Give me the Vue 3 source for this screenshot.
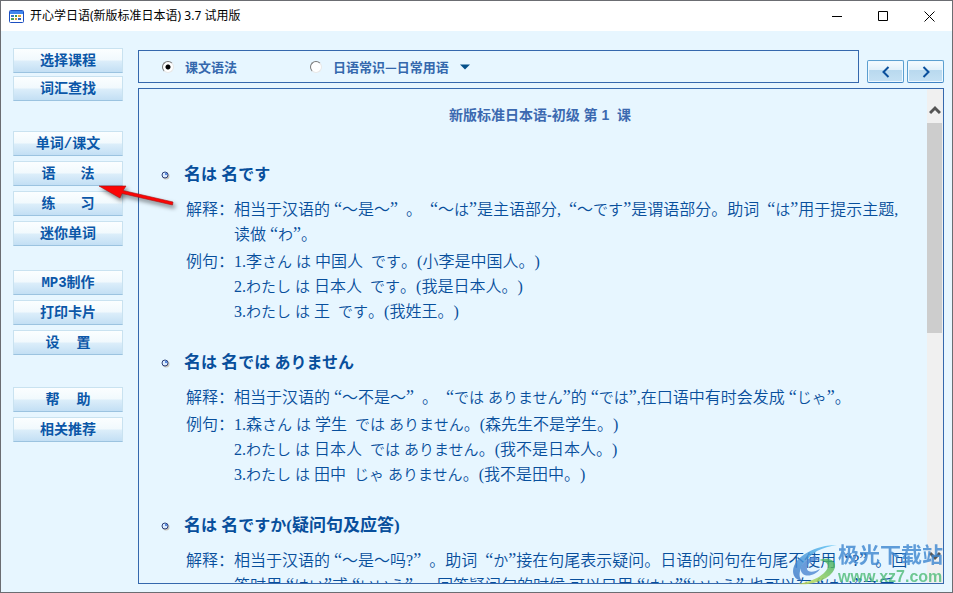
<script setup>
import { ref } from 'vue'

const menu = [
  { name: 'lookup', items: ['选择课程', '词汇查找'] },
  { name: 'study', items: ['单词/课文', '语   法', '练   习', '迷你单词'] },
  { name: 'tools', items: ['MP3制作', '打印卡片', '设  置'] },
  { name: 'about', items: ['帮  助', '相关推荐'] }
]

const topic = ref('grammar')

const heading = '新版标准日本语-初级 第 1  课'

const lessons = [
  {
    title: '名は 名です',
    note: '相当于汉语的 “～是～”  。  “～は”是主语部分,  “～です”是谓语部分。助词  “は”用于提示主题,读做 “わ”。',
    examples: [
      '1.李さん は 中国人  です。(小李是中国人。)',
      '2.わたし は 日本人  です。(我是日本人。)',
      '3.わたし は 王  です。(我姓王。)'
    ]
  },
  {
    title: '名は 名では ありません',
    note: '相当于汉语的 “～不是～”  。  “では ありません”的 “では”,在口语中有时会发成 “じゃ”。',
    examples: [
      '1.森さん は 学生  では ありません。(森先生不是学生。)',
      '2.わたし は 日本人  では ありません。(我不是日本人。)',
      '3.わたし は 田中  じゃ ありません。(我不是田中。)'
    ]
  },
  {
    title: '名は 名ですか(疑问句及应答)',
    note: '相当于汉语的 “～是～吗?”  。助词  “か”接在句尾表示疑问。日语的问句在句尾不使用  “?”  。回答时用 “はい”或 “いいえ”  。回答疑问句的时候,可以只用 “はい”“いいえ”,也可以在 “はい”之后',
    examples: []
  }
]

// kana are set a little smaller than the hanzi around them, quotes a little larger
function runs(text) {
  return text.split(/([\u3041-\u3096]+|[“”])/).filter(Boolean).map(t => ({
    text: t,
    type: /^[\u3041-\u3096]/.test(t) ? 'kana' : /^[“”]/.test(t) ? 'quote' : ''
  }))
}
</script>

<template>
  <div class="window">
    <header class="titlebar">
      <svg class="app-icon" viewBox="0 0 15 13">
        <rect x="0.5" y="0.5" width="14" height="12" rx="1" fill="#fff" stroke="#1c4fc0" />
        <rect x="1" y="1" width="13" height="3" fill="#3f86ee" />
        <rect x="2" y="5" width="3" height="2" fill="#3a76c4" />
        <rect x="6" y="5" width="2" height="2" fill="#2f9a58" />
        <rect x="9" y="5" width="3" height="2" fill="#e0a63a" />
        <rect x="2" y="8" width="3" height="2" fill="#4ba35c" />
        <rect x="6" y="8" width="2" height="2" fill="#d69a35" />
        <rect x="9" y="8" width="3" height="2" fill="#3467b8" />
      </svg>
      <h1>开心学日语(新版标准日本语) 3.7 试用版</h1>
      <div class="window-buttons">
        <button type="button" aria-label="最小化">
          <svg viewBox="0 0 11 11"><path d="M0 5.5h10" /></svg>
        </button>
        <button type="button" aria-label="最大化">
          <svg viewBox="0 0 11 11"><path d="M.5 .5h9v9h-9z" /></svg>
        </button>
        <button type="button" aria-label="关闭">
          <svg viewBox="0 0 11 11"><path d="M.5 .5l10 10M10.5 .5l-10 10" /></svg>
        </button>
      </div>
    </header>

    <div class="body">
      <nav class="sidebar">
        <div v-for="group in menu" :key="group.name" class="group" :class="group.name">
          <button v-for="item in group.items" :key="item" type="button">{{ item }}</button>
        </div>
      </nav>

      <main>
        <div class="top">
          <div class="topics">
            <label class="topic grammar">
              <input v-model="topic" type="radio" name="topic" value="grammar" />
              课文语法
            </label>
            <label class="topic">
              <input v-model="topic" type="radio" name="topic" value="phrases" />
              日语常识—日常用语
            </label>
            <button type="button" class="drop" aria-label="展开">
              <svg viewBox="0 0 10 6"><path d="M0 .5h10L5 5.5z" fill="#04508a" /></svg>
            </button>
          </div>
          <div class="pager">
            <button type="button" aria-label="上一课">
              <svg viewBox="0 0 8 12"><path d="M6.5 1L1.5 6l5 5" /></svg>
            </button>
            <button type="button" aria-label="下一课">
              <svg viewBox="0 0 8 12"><path d="M1.5 1l5 5-5 5" /></svg>
            </button>
          </div>
        </div>

        <div class="panel">
          <article>
            <h2>{{ heading }}</h2>
            <section v-for="lesson in lessons" :key="lesson.title">
              <h3>
                <svg class="bullet" viewBox="0 0 9 9">
                  <circle cx="5" cy="5" r="3.5" fill="#c9c5bd" />
                  <circle cx="4" cy="4" r="3" fill="#dcecff" stroke="#2d3f78" />
                  <path d="M4 4V1.5A2.5 2.5 0 0 1 6.5 4z" fill="#5b8ce0" />
                </svg>
                <span>
                  <span v-for="(run, i) in runs(lesson.title)" :key="i" :class="run.type">{{ run.text }}</span>
                </span>
              </h3>
              <dl>
                <dt>解释：</dt>
                <dd>
                  <span v-for="(run, i) in runs(lesson.note)" :key="i" :class="run.type">{{ run.text }}</span>
                </dd>
                <template v-if="lesson.examples.length">
                  <dt>例句：</dt>
                  <dd>
                    <p v-for="line in lesson.examples" :key="line">
                      <span v-for="(run, i) in runs(line)" :key="i" :class="run.type">{{ run.text }}</span>
                    </p>
                  </dd>
                </template>
              </dl>
            </section>
          </article>
          <div class="scrollbar">
            <button type="button" aria-label="向上滚动">
              <svg viewBox="0 0 12 10"><path d="M1 8l5-5 5 5" /></svg>
            </button>
            <div class="track"><div class="thumb"></div></div>
            <button type="button" aria-label="向下滚动">
              <svg viewBox="0 0 12 10"><path d="M1 2l5 5 5-5" /></svg>
            </button>
          </div>
        </div>
      </main>
    </div>

    <svg class="pointer" viewBox="0 0 84 34">
      <path d="M3 6L30 6L27 10.5L77 22L76.5 25L26 13.5L24 18z" fill="#fb0505" stroke="#a51212" stroke-width="0.6" />
    </svg>

    <div class="watermark">
      <svg viewBox="0 0 46 42">
        <defs>
          <linearGradient id="sky" x1="0" y1="1" x2="1" y2="0">
            <stop offset="0" stop-color="#3a72c4" />
            <stop offset="1" stop-color="#56c4f5" />
          </linearGradient>
          <linearGradient id="leaf" x1="0" y1="1" x2="1" y2="0">
            <stop offset="0" stop-color="#d3e24c" />
            <stop offset="1" stop-color="#35ae65" />
          </linearGradient>
        </defs>
        <path d="M45 1C24 1 2 12 1 27c0 6 4 9 9 10-6-7 0-20 15-30C31 4 38 2 45 1z" fill="url(#sky)" />
        <path d="M23 12C13 15 6 23 10 29c4 5 14 2 18-4-5 3-12 4-13 0-1-5 5-9 12-9z" fill="#4c86d2" />
        <path d="M27 16c9-3 17 0 16 7C41 34 21 42 6 40c13-2 29-9 30-18 0-3-4-5-9-6z" fill="url(#leaf)" />
      </svg>
      <div class="site">
        <strong>极光下载站</strong>
        <span>www.xz7.com</span>
      </div>
    </div>
  </div>
</template>

<style>
body {
  margin: 0;
}
</style>

<style scoped>
* {
  box-sizing: border-box;
}

.window {
  position: relative;
  display: flex;
  flex-direction: column;
  height: 100vh;
  border: 1px solid #6b6d72;
  background: #e7f6ff;
  overflow: hidden;
  font-family: "Noto Sans CJK SC", sans-serif;
}

h1, h2, h3, p, dl, dd {
  margin: 0;
}

button {
  padding: 0;
  border: 0;
  background: none;
  font-family: inherit;
}

/* title bar */
.titlebar {
  display: flex;
  align-items: center;
  height: 30px;
  flex: none;
  padding-left: 8px;
  background: #fff;
}

.app-icon {
  width: 15px;
  height: 13px;
}

.titlebar h1 {
  flex: 1;
  margin-left: 6px;
  font: 12px/28px "Noto Sans", "Noto Sans CJK SC", sans-serif;
  color: #000;
}

.window-buttons {
  display: flex;
  align-self: stretch;
}

.window-buttons button {
  display: flex;
  align-items: center;
  justify-content: center;
  width: 46px;
}

.window-buttons svg {
  width: 11px;
  height: 11px;
  fill: none;
  stroke: #000;
}

/* layout */
.body {
  flex: 1;
  display: flex;
  min-height: 0;
  padding: 17px 8px 8px 12px;
}

.sidebar {
  flex: none;
  width: 110px;
  margin-right: 15px;
}

.group {
  display: flex;
  flex-direction: column;
  gap: 5px;
}

.lookup {
  gap: 3px;
  margin-bottom: 30px;
}

.study {
  margin-bottom: 24px;
}

.tools {
  margin-bottom: 32px;
}

.sidebar button {
  height: 25px;
  border: 1px solid #c9e2f0;
  border-bottom-color: #9bc3e0;
  background: linear-gradient(#fbfeff 0, #f1f9fd 48%, #dceefa 52%, #c3dff4 100%);
  color: #0b57a8;
  font: bold 14px/22px "Liberation Mono", "Noto Sans CJK SC", monospace;
  white-space: pre;
}

main {
  flex: 1;
  display: flex;
  flex-direction: column;
  min-width: 0;
}

/* topic bar */
.top {
  display: flex;
  align-items: flex-end;
  gap: 8px;
  margin: 2px 0 5px;
}

.topics {
  flex: 1;
  display: flex;
  align-items: center;
  height: 33px;
  padding-left: 23px;
  border: 1px solid #3568ad;
}

.topic {
  display: flex;
  align-items: center;
  gap: 11px;
  color: #3568ad;
  font-size: 13px;
  font-weight: bold;
}

.grammar {
  margin-right: 73px;
}

.topic input {
  appearance: none;
  width: 12px;
  height: 12px;
  margin: 0;
  border: 1px solid;
  border-color: #777 #e8e8e8 #e8e8e8 #777;
  border-radius: 50%;
  background: #fff;
}

.topic input:checked {
  background: radial-gradient(circle, #000 2px, #fff 3px);
}

.drop {
  display: flex;
  margin-left: 11px;
}

.drop svg {
  width: 10px;
  height: 6px;
}

.pager {
  display: flex;
  gap: 3px;
}

.pager button {
  display: flex;
  align-items: center;
  justify-content: center;
  width: 37px;
  height: 23px;
  border: 1px solid #5b9fd0;
  border-bottom-color: #3f83c4;
  border-radius: 2px;
  background: linear-gradient(#f5fbff 0, #e1f0fa 42%, #b9d9ef 44%, #c5e1f4 100%);
  box-shadow: inset 0 0 0 1px #eef8ff;
}

.pager svg {
  width: 8px;
  height: 12px;
  fill: none;
  stroke: #0a4f9c;
  stroke-width: 2;
}

/* lesson panel */
.panel {
  flex: 1;
  display: flex;
  min-height: 0;
  border: 1px solid #3568ad;
}

article {
  flex: 1;
  min-width: 0;
  padding: 14px 8px 0 22px;
  overflow: hidden;
  color: #084f9c;
  font-family: "Liberation Serif", "Noto Sans CJK SC", serif;
  font-size: 16px;
  font-weight: 350;
  line-height: 25px;
  text-spacing-trim: space-all;
}

h2 {
  margin-bottom: 35px;
  color: #3c69b0;
  font: bold 14px/24px "Liberation Sans", "Noto Sans CJK SC", sans-serif;
  text-align: center;
  white-space: pre-wrap;
}

section {
  margin-bottom: 26px;
}

h3 {
  display: flex;
  align-items: center;
  gap: 14px;
  margin-bottom: 9px;
  font-size: 17px;
  line-height: 26px;
}

h3 span,
dd,
dd span {
  white-space: pre-wrap;
}

.bullet {
  flex: none;
  width: 9px;
  height: 9px;
}

dl {
  display: grid;
  grid-template-columns: 48px 1fr;
  row-gap: 2px;
  padding: 0 8px 0 25px;
}

.kana {
  font-family: "Noto Sans CJK JP", sans-serif;
  font-size: 15px;
  line-height: 20px;
}

h3 .kana {
  font-size: 16px;
}

.quote {
  font-size: 18px;
  line-height: 20px;
}

.scrollbar {
  flex: none;
  display: flex;
  flex-direction: column;
  width: 16px;
  padding: 16px 0 14px;
  background: #f0f0f0;
}

.scrollbar button {
  display: flex;
  align-items: flex-start;
  justify-content: center;
  height: 18px;
}

.scrollbar svg {
  width: 12px;
  height: 10px;
  fill: none;
  stroke: #555;
  stroke-width: 3;
}

.track {
  flex: 1;
}

.thumb {
  width: 15px;
  height: 49%;
  background: #cdcdcd;
}

/* overlays */
.pointer {
  position: absolute;
  left: 95px;
  top: 179px;
  width: 84px;
  height: 34px;
  filter: drop-shadow(2px 3px 2px rgba(0, 0, 0, 0.5));
  pointer-events: none;
}

.watermark {
  position: absolute;
  right: 9px;
  bottom: 6px;
  display: flex;
  align-items: center;
  opacity: 0.8;
  pointer-events: none;
}

.watermark svg {
  width: 46px;
  height: 42px;
}

.site {
  display: flex;
  flex-direction: column;
  font-family: "Liberation Sans", "Noto Sans CJK SC", sans-serif;
}

.site strong {
  color: #3d86d0;
  font-size: 21px;
  line-height: 24px;
}

.site span {
  color: #4fbc78;
  font-size: 16px;
  font-weight: bold;
  line-height: 19px;
}
</style>
